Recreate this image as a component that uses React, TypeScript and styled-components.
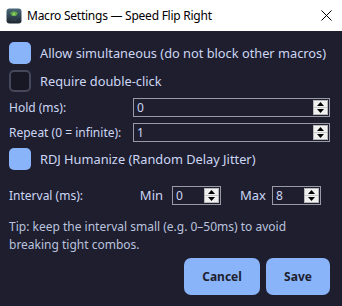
import React from "react";
import styled, { createGlobalStyle } from "styled-components";

const Global = createGlobalStyle`
  html, body { margin: 0; padding: 0; background: #1e1e2e; }
  * { box-sizing: border-box; }
`;

const Window = styled.div`
  width: 342px;
  height: 306px;
  display: flex;
  flex-direction: column;
  background: #1e1e2e;
  font-family: "Noto Sans", "Open Sans", sans-serif;
  color: #cdd6f4;
  overflow: hidden;
`;

const TitleBar = styled.div`
  height: 31px;
  flex: none;
  background: #ffffff;
  display: flex;
  align-items: center;
  padding: 0 10px 0 6px;
  color: #000;
  font-size: 12px;
`;

const TitleText = styled.span`
  margin-left: 5px;
  flex: 1;
  letter-spacing: -0.25px;
`;

const Content = styled.div`
  flex: 1;
  display: flex;
  flex-direction: column;
  padding: 11px 12px 10px 9px;
`;

const CheckRow = styled.label<{ $mt?: number }>`
  display: flex;
  align-items: center;
  gap: 9px;
  height: 22px;
  margin-top: ${(p) => p.$mt ?? 0}px;
  font-size: 12.8px;
  white-space: nowrap;
  color: #cdd6f4;
`;

const Box = styled.span<{ $on: boolean }>`
  width: 22px;
  height: 22px;
  border-radius: 5px;
  flex: none;
  background: ${(p) => (p.$on ? "#89b4fa" : "#181825")};
  border: ${(p) => (p.$on ? "none" : "2px solid #45475a")};
`;

const FormRow = styled.div<{ $mt?: number }>`
  display: grid;
  grid-template-columns: 124px 1fr;
  align-items: center;
  height: 19px;
  margin-top: ${(p) => p.$mt ?? 0}px;
  font-size: 12px;
`;

const Label = styled.span`
  font-size: 12px;
  color: #cdd6f4;
  white-space: nowrap;
`;

const SpinBox = styled.div<{ $w?: number }>`
  position: relative;
  height: 19px;
  width: ${(p) => (p.$w ? `${p.$w}px` : "auto")};
  border: 1px solid #9a9aa6;
  background: #1e1e2e;
  display: flex;
  align-items: center;
  padding-left: 3px;
  font-size: 12px;
  color: #cdd6f4;
`;

const SpinValue = styled.span`
  flex: 1;
`;

const SpinButtons = styled.div`
  width: 15px;
  height: 15px;
  margin-right: 1px;
  display: flex;
  flex-direction: column;
  background: #f0f0f0;
  border: 1px solid #b8b8b8;
`;

const SpinHalf = styled.div<{ $up?: boolean }>`
  flex: 1;
  display: flex;
  align-items: center;
  justify-content: center;
  border-bottom: ${(p) => (p.$up ? "1px solid #c8c8c8" : "none")};
  svg { display: block; }
`;

const IntervalRow = styled.div`
  display: flex;
  align-items: center;
  height: 18px;
  margin-top: 16px;
  padding-right: 9px;
  font-size: 12px;
`;

const Spacer = styled.div`
  flex: 1;
`;

const SmallLabel = styled.span<{ $mr: number; $ml?: number }>`
  font-size: 13px;
  margin-right: ${(p) => p.$mr}px;
  margin-left: ${(p) => p.$ml ?? 0}px;
  color: #cdd6f4;
`;

const Tip = styled.p`
  margin: 14px 0 0 0;
  font-size: 12px;
  line-height: 18px;
  color: #bac2de;
  width: 300px;
`;

const Buttons = styled.div`
  display: flex;
  justify-content: flex-end;
  gap: 6px;
  margin-top: 4px;
`;

const Button = styled.button<{ $w: number }>`
  width: ${(p) => p.$w}px;
  height: 37px;
  border: none;
  border-radius: 7px;
  background: #89b4fa;
  color: #1e1e2e;
  font-family: "Noto Sans", "Open Sans", sans-serif;
  font-weight: 700;
  font-size: 12px;
`;

const Arrow = ({ up }: { up?: boolean }) => (
  <svg width="7" height="4" viewBox="0 0 7 4">
    {up ? <polygon points="0,4 7,4 3.5,0" fill="#000" /> : <polygon points="0,0 7,0 3.5,4" fill="#000" />}
  </svg>
);

const Spin = ({ value, w }: { value: string; w?: number }) => (
  <SpinBox $w={w}>
    <SpinValue>{value}</SpinValue>
    <SpinButtons>
      <SpinHalf $up>
        <Arrow up />
      </SpinHalf>
      <SpinHalf>
        <Arrow />
      </SpinHalf>
    </SpinButtons>
  </SpinBox>
);

const AppIcon = () => (
  <svg width="16" height="16" viewBox="0 0 16 16">
    <defs>
      <linearGradient id="ig" x1="0" y1="0" x2="0" y2="1">
        <stop offset="0" stopColor="#4b6a7a" />
        <stop offset="1" stopColor="#1c2630" />
      </linearGradient>
    </defs>
    <rect x="0.5" y="0.5" width="15" height="15" rx="3" fill="url(#ig)" />
    <path d="M4 5 L8 3 L12 5 L10 8 L6 8 Z" fill="#5fa84a" />
    <path d="M5 10 L11 10 L10 13 L6 13 Z" fill="#2e3d46" />
    <circle cx="8" cy="6" r="1.2" fill="#9ad06a" />
  </svg>
);

const CloseIcon = () => (
  <svg width="11" height="11" viewBox="0 0 11 11">
    <path d="M0.5 0.5 L10.5 10.5 M10.5 0.5 L0.5 10.5" stroke="#000" strokeWidth="1" />
  </svg>
);

export default function App() {
  return (
    <>
      <Global />
      <Window>
        <TitleBar>
          <AppIcon />
          <TitleText>Macro Settings — Speed Flip Right</TitleText>
          <CloseIcon />
        </TitleBar>
        <Content>
          <CheckRow>
            <Box $on />
            Allow simultaneous (do not block other macros)
          </CheckRow>
          <CheckRow $mt={6}>
            <Box $on={false} />
            Require double-click
          </CheckRow>
          <FormRow $mt={6}>
            <Label>Hold (ms):</Label>
            <Spin value="0" />
          </FormRow>
          <FormRow $mt={6}>
            <Label>Repeat (0 = infinite):</Label>
            <Spin value="1" />
          </FormRow>
          <CheckRow $mt={6}>
            <Box $on />
            RDJ Humanize (Random Delay Jitter)
          </CheckRow>
          <IntervalRow>
            <Label>Interval (ms):</Label>
            <Spacer />
            <SmallLabel $mr={9}>Min</SmallLabel>
            <Spin value="0" w={49} />
            <SmallLabel $mr={6} $ml={19}>Max</SmallLabel>
            <Spin value="8" w={49} />
          </IntervalRow>
          <Tip>Tip: keep the interval small (e.g. 0–50ms) to avoid breaking tight combos.</Tip>
          <Buttons>
            <Button $w={76}>Cancel</Button>
            <Button $w={64}>Save</Button>
          </Buttons>
        </Content>
      </Window>
    </>
  );
}
